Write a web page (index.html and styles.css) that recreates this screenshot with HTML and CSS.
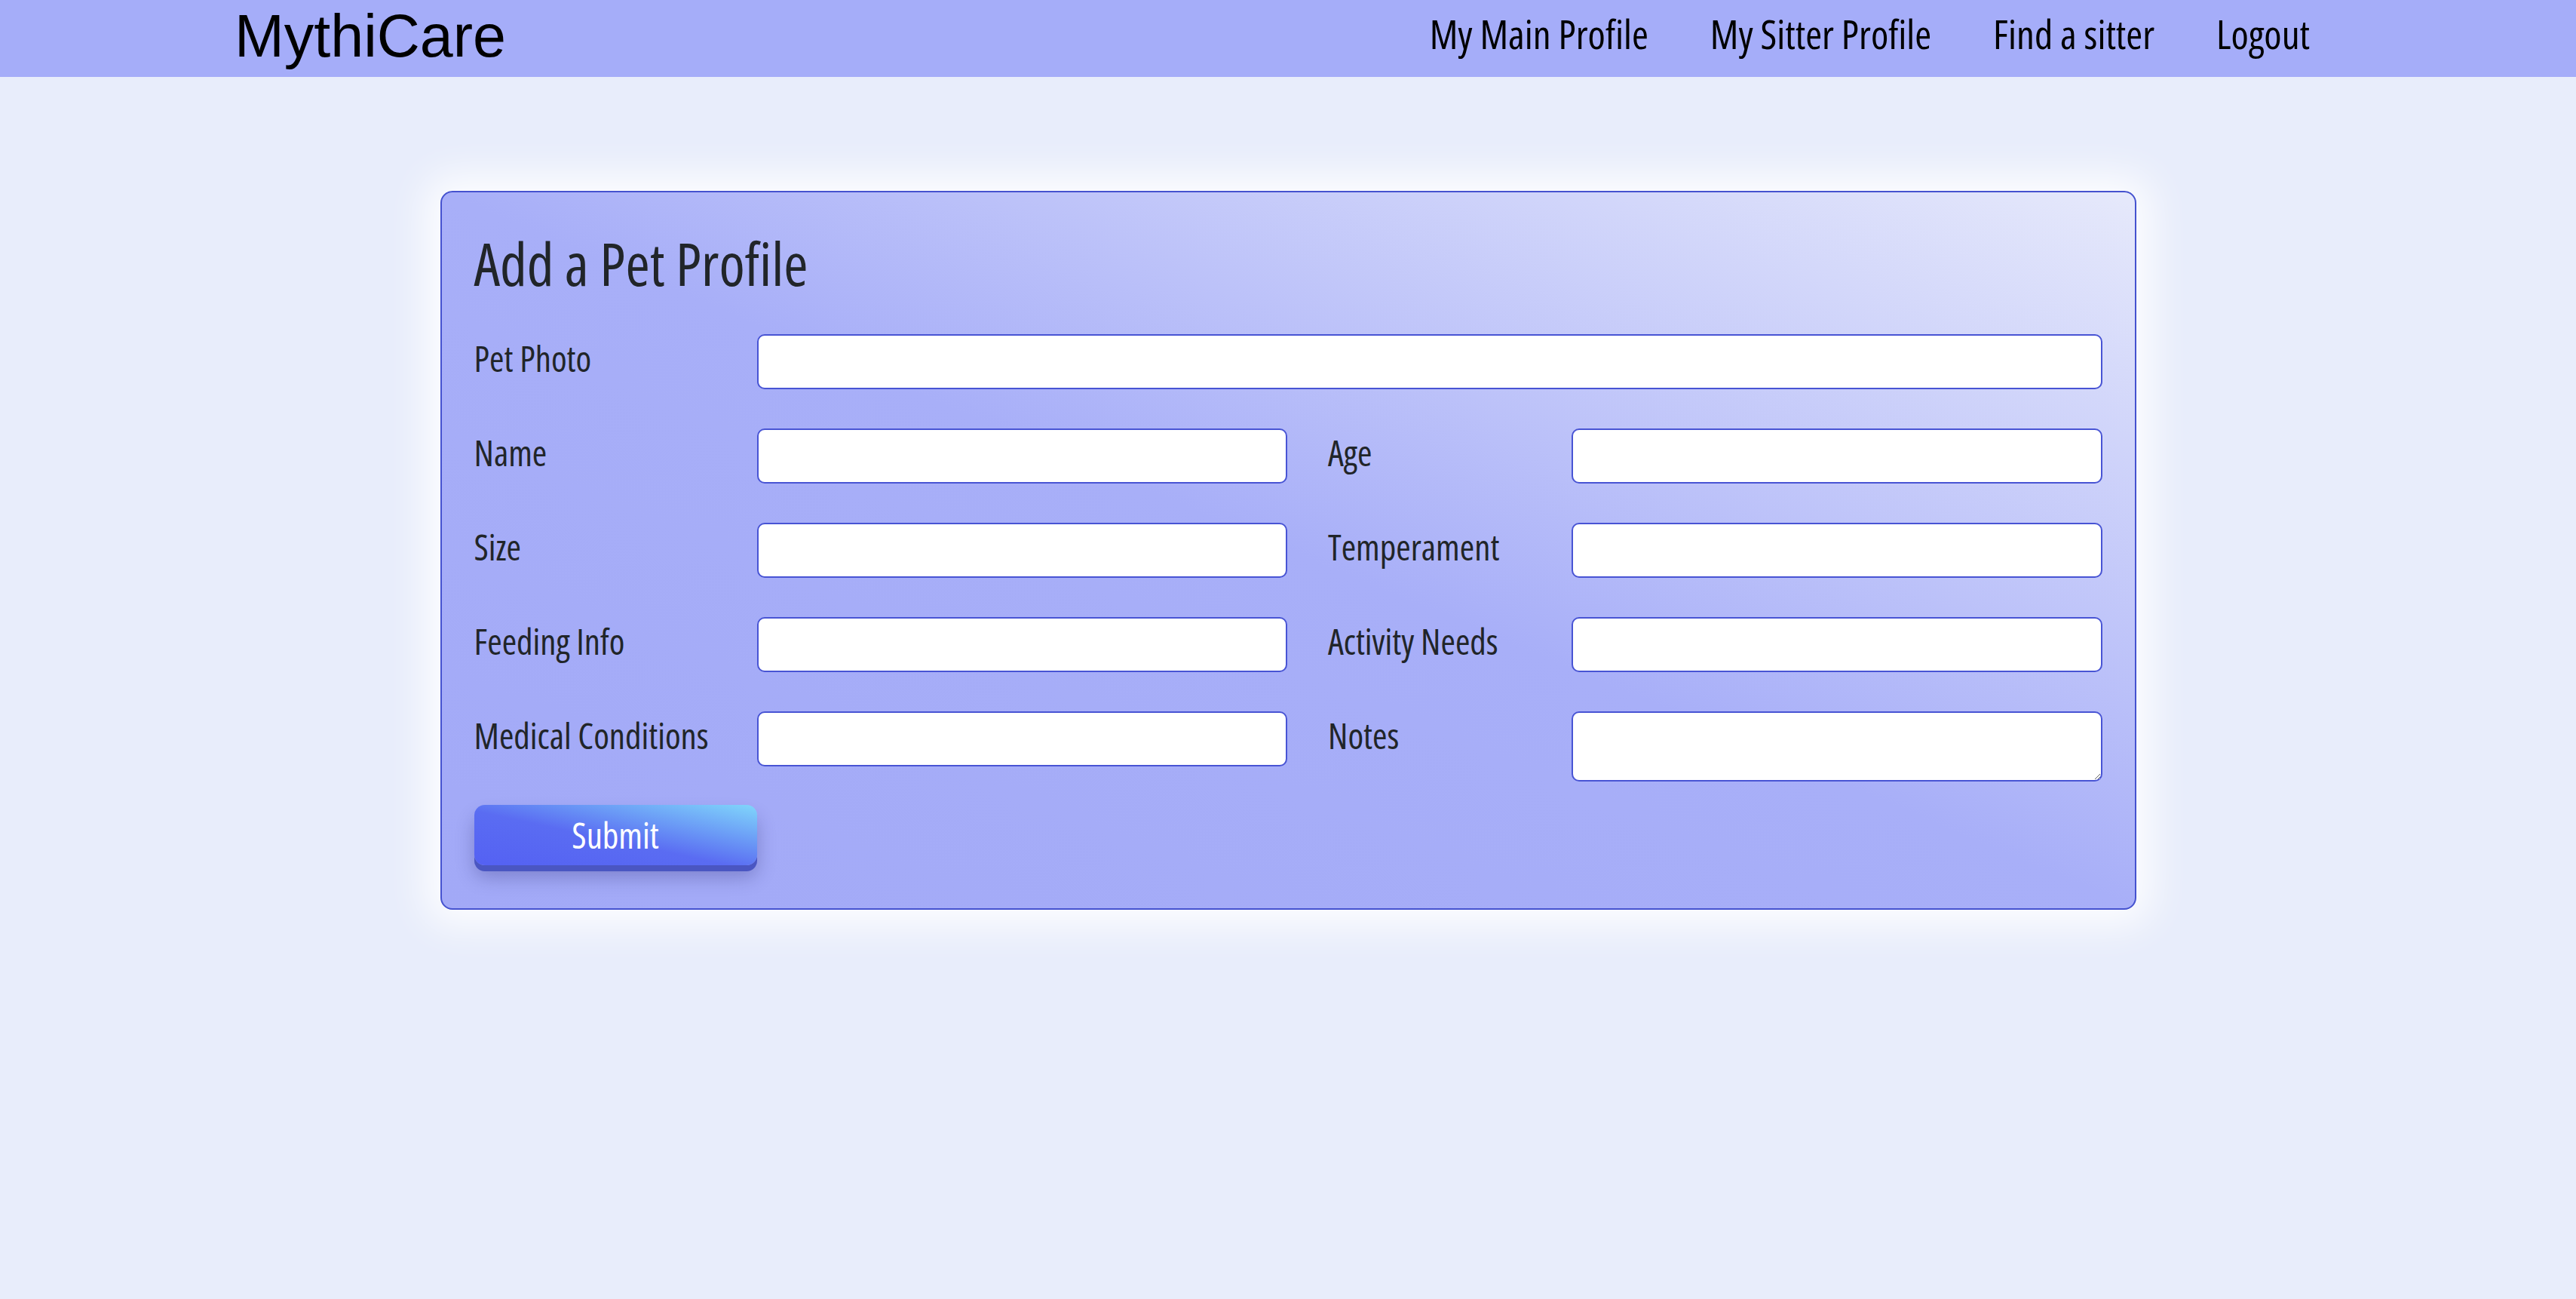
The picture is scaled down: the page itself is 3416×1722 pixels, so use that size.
FILE: index.html
```html
<!DOCTYPE html>
<html lang="en">
<head>
<meta charset="utf-8">
<title>MythiCare - Add a Pet Profile</title>
<link rel="stylesheet" href="styles.css">
</head>
<body>
<header class="topbar">
  <a class="brand" href="#">MythiCare</a>
  <nav class="nav">
    <a class="nav-link" href="#">My Main Profile</a>
    <a class="nav-link" href="#">My Sitter Profile</a>
    <a class="nav-link" href="#">Find a sitter</a>
    <a class="nav-link" href="#">Logout</a>
  </nav>
</header>
<main class="page">
  <section class="card">
    <h2 class="card-title">Add a Pet Profile</h2>
    <form class="pet-form">
      <label class="field-label" for="photo">Pet Photo</label>
      <input class="field-input field-wide" id="photo" type="text">

      <label class="field-label" for="name">Name</label>
      <input class="field-input" id="name" type="text">
      <label class="field-label" for="age">Age</label>
      <input class="field-input" id="age" type="text">

      <label class="field-label" for="size">Size</label>
      <input class="field-input" id="size" type="text">
      <label class="field-label" for="temperament">Temperament</label>
      <input class="field-input" id="temperament" type="text">

      <label class="field-label" for="feeding">Feeding Info</label>
      <input class="field-input" id="feeding" type="text">
      <label class="field-label" for="activity">Activity Needs</label>
      <input class="field-input" id="activity" type="text">

      <label class="field-label" for="medical">Medical Conditions</label>
      <input class="field-input" id="medical" type="text">
      <label class="field-label" for="notes">Notes</label>
      <textarea class="field-input field-notes" id="notes"></textarea>
    </form>
    <button class="submit-btn" type="button">Submit</button>
  </section>
</main>
</body>
</html>
```
FILE: styles.css
```css
html, body {
  margin: 0;
  padding: 0;
}

body {
  background: #e8edfb;
  font-family: "Open Sans", sans-serif;
  font-stretch: 75%;
  color: #212529;
  min-height: 1722px;
}

.topbar {
  height: 102px;
  background: #a5adf9;
  display: flex;
  align-items: center;
  justify-content: space-between;
  padding: 0 313px 0 311px;
}

.brand {
  font-family: "Liberation Sans", Arial, sans-serif;
  font-stretch: normal;
  font-size: 79px;
  color: #000;
  text-decoration: none;
  padding-bottom: 7px;
}

.nav {
  display: flex;
  padding-bottom: 13px;
}

.nav-link {
  font-size: 53px;
  color: #000;
  text-decoration: none;
  padding: 0 41px;
}

.nav-link:last-child {
  padding-right: 40px;
}

.page {
  padding-top: 151px;
}

.card {
  box-sizing: border-box;
  width: 2249px;
  margin: 0 auto;
  border: 2px solid #4552cf;
  border-radius: 16px;
  padding: 58px 43px 57px;
  background: linear-gradient(to top right, #a2a9f7 0%, #a8aff8 50%, #e6e9fb 100%);
  box-shadow: 0 0 50px 22px rgba(255, 255, 255, 0.85);
}

.card-title {
  margin: 0 0 58px;
  font-size: 78px;
  line-height: 72px;
  font-weight: 500;
  color: #212529;
}

.pet-form {
  display: grid;
  grid-template-columns: 321px 1fr 269px 1fr;
  column-gap: 54px;
  row-gap: 52px;
  align-items: start;
}

.field-label {
  font-size: 47px;
  line-height: 64px;
  color: #212529;
  white-space: nowrap;
}

.field-input {
  box-sizing: border-box;
  display: block;
  width: 100%;
  height: 73px;
  margin: 0;
  border: 2px solid #4854d4;
  border-radius: 10px;
  background: #fff;
  font: inherit;
  font-size: 40px;
  padding: 0 16px;
}

.field-wide {
  grid-column: 2 / 5;
}

.field-notes {
  height: 93px;
  resize: both;
}

.submit-btn {
  display: block;
  width: 375px;
  height: 80px;
  margin-top: 31px;
  border: none;
  border-radius: 14px;
  background: linear-gradient(to top right, #5461f3 0%, #5a6cf2 45%, #80d6fb 100%);
  box-shadow: 0 8px 0 #4a56c2, 0 16px 24px rgba(30, 30, 100, 0.28);
  color: #fff;
  font-family: inherit;
  font-stretch: inherit;
  font-size: 47px;
  line-height: 1;
  cursor: pointer;
}
```
